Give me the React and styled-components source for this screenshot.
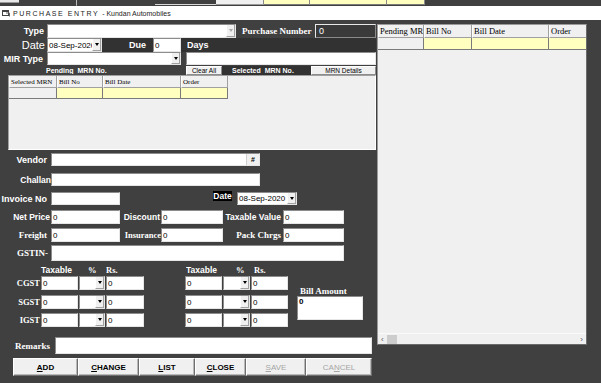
import React from "react";
import styled, { createGlobalStyle } from "styled-components";

const GlobalStyle = createGlobalStyle`
  html, body {
    margin: 0;
    padding: 0;
    background: #404040;
  }
  body {
    width: 601px;
    height: 383px;
    overflow: hidden;
    font-family: "Liberation Sans", Arial, sans-serif;
  }
  * {
    box-sizing: border-box;
  }
`;

const SANS = `"Liberation Sans", Arial, sans-serif`;
const SERIF = `"Liberation Serif", "Times New Roman", serif`;

const Screen = styled.div`
  width: 601px;
  height: 383px;
  display: flex;
  flex-direction: column;
  background: #404040;
  overflow: hidden;
`;

/* the bottom edge of the window behind */
const BackStrip = styled.div`
  height: 6px;
  display: flex;
  align-items: flex-start;
`;

const StripCell = styled.div`
  width: ${(p) => p.$w}px;
  margin-left: ${(p) => p.$ml || 0}px;
  height: ${(p) => p.$h || 5}px;
  background: ${(p) => p.$bg || "transparent"};
  border-bottom: 1px solid ${(p) => p.$line || "#9a9a9a"};
  border-right: ${(p) => (p.$sep ? "1px solid #8a8a8a" : "none")};
`;

const TitleBar = styled.div`
  height: 14px;
  background: #fff;
  display: flex;
  align-items: center;
  padding-left: 2px;
`;

const Title = styled.span`
  margin-left: 3px;
  font-family: ${SANS};
  font-size: 7px;
  letter-spacing: 1.55px;
  color: #222;
`;

const SubTitle = styled.span`
  margin-left: 3px;
  font-family: ${SANS};
  font-size: 7px;
  color: #222;
`;

const Body = styled.div`
  flex: 1;
  display: flex;
`;

const LeftPane = styled.div`
  width: 377px;
  display: flex;
  flex-direction: column;
`;

const Row = styled.div`
  display: flex;
  align-items: ${(p) => p.$align || "center"};
  height: ${(p) => p.$h}px;
  margin-top: ${(p) => p.$mt || 0}px;
  margin-left: ${(p) => p.$ml || 0}px;
  flex-shrink: 0;
`;

const Label = styled.div`
  width: ${(p) => p.$w}px;
  margin-left: ${(p) => p.$ml || 0}px;
  padding-right: ${(p) => p.$pr || 0}px;
  padding-left: ${(p) => p.$pl || 0}px;
  text-align: ${(p) => p.$align || "right"};
  font-family: ${(p) => (p.$serif ? SERIF : SANS)};
  font-size: ${(p) => p.$size || 9}px;
  font-weight: ${(p) => (p.$light ? 400 : 700)};
  color: #fff;
  white-space: pre;
  flex-shrink: 0;
  overflow: hidden;
`;

const TextBox = styled.div`
  position: relative;
  width: ${(p) => p.$w}px;
  height: ${(p) => (p.$h ? `${p.$h}px` : "100%")};
  margin-left: ${(p) => p.$ml || 0}px;
  background: #fff;
  border: 1px solid;
  border-color: #8c8c8c #e6e6e6 #e6e6e6 #8c8c8c;
  font-family: ${SANS};
  font-size: ${(p) => p.$size || 8}px;
  font-weight: ${(p) => (p.$bold ? 700 : 400)};
  color: #000;
  padding-left: 1px;
  display: flex;
  align-items: ${(p) => (p.$top ? "flex-start" : "center")};
  flex-shrink: 0;
  white-space: nowrap;
  overflow: hidden;
`;

const NumberBox = styled.div`
  width: ${(p) => p.$w}px;
  height: 100%;
  background: #3a3a3a;
  border: 1px solid;
  border-color: #e8e8e8 #8a8a8a #8a8a8a #e8e8e8;
  color: #fff;
  font-family: ${SANS};
  font-size: 9px;
  padding-left: 3px;
  display: flex;
  align-items: center;
`;

const DropButton = styled.div`
  position: absolute;
  right: 0;
  top: 0;
  bottom: 0;
  width: ${(p) => p.$w || 9}px;
  background: #f0f0f0;
  border-left: 1px solid #fff;
  border-right: 1px solid #a0a0a0;
  border-bottom: 1px solid #a0a0a0;
  display: flex;
  align-items: center;
  justify-content: center;

  &::after {
    content: "";
    border-left: 2.5px solid transparent;
    border-right: 2.5px solid transparent;
    border-top: 3px solid ${(p) => (p.$disabled ? "#a8a8a8" : "#000")};
  }
`;

const HashButton = styled.div`
  position: absolute;
  right: 0;
  top: 0;
  bottom: 0;
  width: 13px;
  background: #f0f0f0;
  border-left: 1px solid #d0d0d0;
  font-family: ${SANS};
  font-size: 7px;
  font-weight: 700;
  display: flex;
  align-items: center;
  justify-content: center;
`;

const DarkPanel = styled.div`
  width: ${(p) => p.$w}px;
  height: 100%;
  background: #323232;
  display: flex;
  align-items: center;
`;

const SmallButton = styled.div`
  width: ${(p) => p.$w}px;
  height: 100%;
  background: #f0f0f0;
  border: 1px solid;
  border-color: #fff #8c8c8c #8c8c8c #fff;
  font-family: ${SANS};
  font-size: 6.5px;
  color: #000;
  display: flex;
  align-items: center;
  justify-content: center;
  flex-shrink: 0;
`;

const DateTag = styled.div`
  width: 19px;
  height: 10px;
  margin-left: ${(p) => p.$ml || 0}px;
  background: #000;
  color: #fff;
  font-family: ${SANS};
  font-size: 8.5px;
  font-weight: 700;
  display: flex;
  align-items: center;
  justify-content: center;
  align-self: flex-start;
  margin-top: -1px;
`;

const MrnGrid = styled.div`
  width: 368px;
  height: 75px;
  margin-left: 8px;
  background: #f0f0f0;
  border: 1px solid;
  border-color: #a0a0a0 #fff #fff #a0a0a0;
  flex-shrink: 0;
`;

const GridRow = styled.div`
  display: flex;
  height: ${(p) => p.$h}px;
`;

const HeadCell = styled.div`
  width: ${(p) => p.$w}px;
  height: 100%;
  background: #f0f0f0;
  border-right: 1px solid #a0a0a0;
  border-bottom: 1px solid #a0a0a0;
  border-left: 1px solid #fff;
  font-family: ${SERIF};
  font-size: ${(p) => p.$size || 7}px;
  color: #000;
  padding-left: 1px;
  display: flex;
  align-items: center;
  white-space: nowrap;
  overflow: hidden;
  flex-shrink: 0;
`;

const DataCell = styled.div`
  width: ${(p) => p.$w}px;
  height: 100%;
  background: ${(p) => (p.$fixed ? "#f0f0f0" : "#ffffc0")};
  border-right: 1px solid #7a7a7a;
  border-bottom: 1px solid #7a7a7a;
  flex-shrink: 0;
`;

const TaxSection = styled.div`
  display: flex;
  margin-top: 3px;
`;

const TaxTable = styled.div`
  display: flex;
  flex-direction: column;
`;

const BillBlock = styled.div`
  display: flex;
  flex-direction: column;
  margin-left: 9px;
  margin-top: 22px;
`;

const ActionBar = styled.div`
  display: flex;
  height: 18px;
  margin-top: 4px;
  margin-left: 13px;
`;

const ActionButton = styled.div`
  width: ${(p) => p.$w}px;
  height: 100%;
  background: #f0f0f0;
  border: 1px solid;
  border-color: #fff #6e6e6e #6e6e6e #fff;
  box-shadow: inset -1px -1px 0 #b8b8b8;
  font-family: ${SANS};
  font-size: 8px;
  font-weight: ${(p) => (p.$disabled ? 400 : 700)};
  color: ${(p) => (p.$disabled ? "#a6a6a6" : "#000")};
  display: flex;
  align-items: center;
  justify-content: center;

  u {
    text-decoration: underline;
  }
`;

const SidePanel = styled.div`
  width: 210px;
  height: 321px;
  margin-top: 4px;
  background: #f0f0f0;
  border: 1px solid;
  border-color: #9a9a9a #6a6a6a #6a6a6a #9a9a9a;
  display: flex;
  flex-direction: column;
  overflow: hidden;
`;

const Spacer = styled.div`
  flex: 1;
`;

const ScrollBar = styled.div`
  height: 11px;
  background: #f0f0f0;
  border-top: 1px solid #fafafa;
  display: flex;
  align-items: center;
  padding: 0 3px;
  font-family: ${SANS};
  font-size: 8px;
  color: #555;
`;

const Thumb = styled.div`
  width: 10px;
  height: 9px;
  margin-left: 3px;
  background: #cdcdcd;
`;

const TitleIcon = () => (
  <svg width="8" height="8" viewBox="0 0 8 8">
    <rect x="0.5" y="1.5" width="6" height="5" fill="none" stroke="#444" />
    <rect x="0.5" y="1.5" width="6" height="1.5" fill="#444" />
    <path d="M4 4 L7.5 4 L7.5 7.5" fill="none" stroke="#666" />
  </svg>
);

const Combo = ({ w, ml, text, disabled }) => (
  <TextBox $w={w} $ml={ml}>
    {text}
    <DropButton $disabled={disabled} />
  </TextBox>
);

const TaxRow = ({ name, mt }) => (
  <Row $h={14} $mt={mt}>
    <Label $w={41} $pr={1} $serif $size={8.5}>
      {name}
    </Label>
    <TextBox $w={37}>0</TextBox>
    <Combo w={26} ml={1} />
    <TextBox $w={38} $ml={1}>0</TextBox>
    <TextBox $w={37} $ml={41}>0</TextBox>
    <Combo w={27} ml={1} />
    <TextBox $w={37} $ml={1}>0</TextBox>
  </Row>
);

const leftCols = [
  { w: 48, t: "Selected MRN" },
  { w: 46, t: "Bill No" },
  { w: 78, t: "Bill Date" },
  { w: 47, t: "Order" },
];

const sideCols = [
  { w: 46, t: "Pending MR" },
  { w: 48, t: "Bill No" },
  { w: 77, t: "Bill Date" },
  { w: 40, t: "Order" },
];

const actions = [
  { w: 65, k: "A", rest: "DD" },
  { w: 61, k: "C", rest: "HANGE" },
  { w: 56, k: "L", rest: "IST" },
  { w: 51, k: "C", rest: "LOSE" },
  { w: 60, k: "S", rest: "AVE", disabled: true },
  { w: 66, pre: "CA", k: "N", rest: "CEL", disabled: true },
];

export default function App() {
  return (
    <>
      <GlobalStyle />
      <Screen>
        <BackStrip>
          <StripCell $w={19} $h={3} $bg="#e8e8e8" />
          <StripCell $w={1} $ml={57} $h={6} $bg="#bdbdbd" />
          <StripCell $w={61} $ml={78} $h={5} $line="#d8d8d8" />
          <StripCell $w={48} $bg="#f0f0f0" $sep />
          <StripCell $w={46} $bg="#ffffc0" $sep $line="#7a7a7a" />
          <StripCell $w={77} $bg="#ffffc0" $sep $line="#7a7a7a" />
          <StripCell $w={38} $bg="#ffffc0" $sep $line="#7a7a7a" />
        </BackStrip>

        <TitleBar>
          <TitleIcon />
          <Title>PURCHASE ENTRY</Title>
          <SubTitle>- Kundan Automobiles</SubTitle>
        </TitleBar>

        <Body>
          <LeftPane>
            <Row $h={14} $mt={4}>
              <Label $w={45} $pr={1}>Type</Label>
              <Combo w={189} ml={2} disabled />
              <Label $w={79} $align="left" $pl={6} $serif $size={9}>
                Purchase Number
              </Label>
              <NumberBox $w={61}>0</NumberBox>
            </Row>

            <Row $h={14}>
              <Label $w={45} $light $size={11}>Date</Label>
              <Combo w={55} ml={2} text="08-Sep-2020" />
              <DarkPanel $w={274}>
                <Label $w={51} $pr={7}>Due</Label>
                <TextBox $w={28}>0</TextBox>
                <Label $w={40} $ml={6} $align="left">Days</Label>
              </DarkPanel>
            </Row>

            <Row $h={13}>
              <Label $w={45} $pr={2}>MIR Type</Label>
              <Combo w={134} ml={2} />
              <TextBox $w={190} $ml={5} />
            </Row>

            <Row $h={9} $mt={1}>
              <Label $w={140} $ml={46} $align="left" $size={7}>
                {"Pending  MRN No."}
              </Label>
              <SmallButton $w={36}>Clear All</SmallButton>
              <DarkPanel $w={89}>
                <Label $w={79} $ml={10} $align="left" $size={7}>
                  {"Selected  MRN No."}
                </Label>
              </DarkPanel>
              <SmallButton $w={65}>MRN Details</SmallButton>
            </Row>

            <MrnGrid>
              <GridRow $h={12}>
                {leftCols.map((c) => (
                  <HeadCell key={c.t} $w={c.w}>
                    {c.t}
                  </HeadCell>
                ))}
              </GridRow>
              <GridRow $h={11}>
                {leftCols.map((c, i) => (
                  <DataCell key={c.t} $w={c.w} $fixed={i === 0} />
                ))}
              </GridRow>
            </MrnGrid>

            <Row $h={13} $mt={3}>
              <Label $w={48} $pr={1}>Vendor</Label>
              <TextBox $w={209} $ml={3}>
                <HashButton>#</HashButton>
              </TextBox>
            </Row>

            <Row $h={13} $mt={7}>
              <Label $w={51} $size={8.5}>Challan</Label>
              <TextBox $w={209} />
            </Row>

            <Row $h={13} $mt={6}>
              <Label $w={48} $pr={1}>Invoice No</Label>
              <TextBox $w={69} $ml={3} />
              <DateTag $ml={93}>Date</DateTag>
              <Combo w={60} ml={5} text="08-Sep-2020" />
            </Row>

            <Row $h={14} $mt={5}>
              <Label $w={51} $pr={1} $size={8.5}>Net Price</Label>
              <TextBox $w={69}>0</TextBox>
              <Label $w={41} $pr={1} $size={8.5}>Discount</Label>
              <TextBox $w={62}>0</TextBox>
              <Label $w={60} $pr={2} $size={8.5}>Taxable Value</Label>
              <TextBox $w={61}>0</TextBox>
            </Row>

            <Row $h={14} $mt={4}>
              <Label $w={51} $pr={4} $serif>Freight</Label>
              <TextBox $w={69}>0</TextBox>
              <Label $w={41} $serif $size={8.5}>Insurance</Label>
              <TextBox $w={62}>0</TextBox>
              <Label $w={60} $pr={2} $serif>Pack Chrgs</Label>
              <TextBox $w={61}>0</TextBox>
            </Row>

            <Row $h={16} $mt={3}>
              <Label $w={51} $pr={3} $serif>GSTIN-</Label>
              <TextBox $w={293} />
            </Row>

            <TaxSection>
              <TaxTable>
                <Row $h={11}>
                  <Label $w={88} $pl={41} $align="left" $size={8.5}>Taxable</Label>
                  <Label $w={18} $align="left" $serif $size={8.5}>%</Label>
                  <Label $w={80} $align="left" $serif $size={8.5}>Rs.</Label>
                  <Label $w={50} $align="left" $size={8.5}>Taxable</Label>
                  <Label $w={18} $align="left" $serif $size={8.5}>%</Label>
                  <Label $w={34} $align="left" $serif $size={8.5}>Rs.</Label>
                </Row>
                <TaxRow name="CGST" mt={1} />
                <TaxRow name="SGST" mt={5} />
                <TaxRow name="IGST" mt={4} />
              </TaxTable>
              <BillBlock>
                <Label $w={66} $pl={3} $align="left" $serif>Bill Amount</Label>
                <TextBox $w={66} $h={24} $top $bold $size={8}>0</TextBox>
              </BillBlock>
            </TaxSection>

            <Row $h={17} $mt={10}>
              <Label $w={52} $pr={2} $serif>Remarks</Label>
              <TextBox $w={317} $ml={3} />
            </Row>

            <ActionBar>
              {actions.map((a, i) => (
                <ActionButton key={i} $w={a.w} $disabled={a.disabled}>
                  {a.pre}
                  <u>{a.k}</u>
                  {a.rest}
                </ActionButton>
              ))}
            </ActionBar>
          </LeftPane>

          <SidePanel>
            <GridRow $h={13}>
              {sideCols.map((c) => (
                <HeadCell key={c.t} $w={c.w} $size={8.5}>
                  {c.t}
                </HeadCell>
              ))}
            </GridRow>
            <GridRow $h={12}>
              {sideCols.map((c, i) => (
                <DataCell key={c.t} $w={c.w} $fixed={i === 0} />
              ))}
            </GridRow>
            <Spacer />
            <ScrollBar>
              ‹
              <Thumb />
              <Spacer />›
            </ScrollBar>
          </SidePanel>
        </Body>
      </Screen>
    </>
  );
}
